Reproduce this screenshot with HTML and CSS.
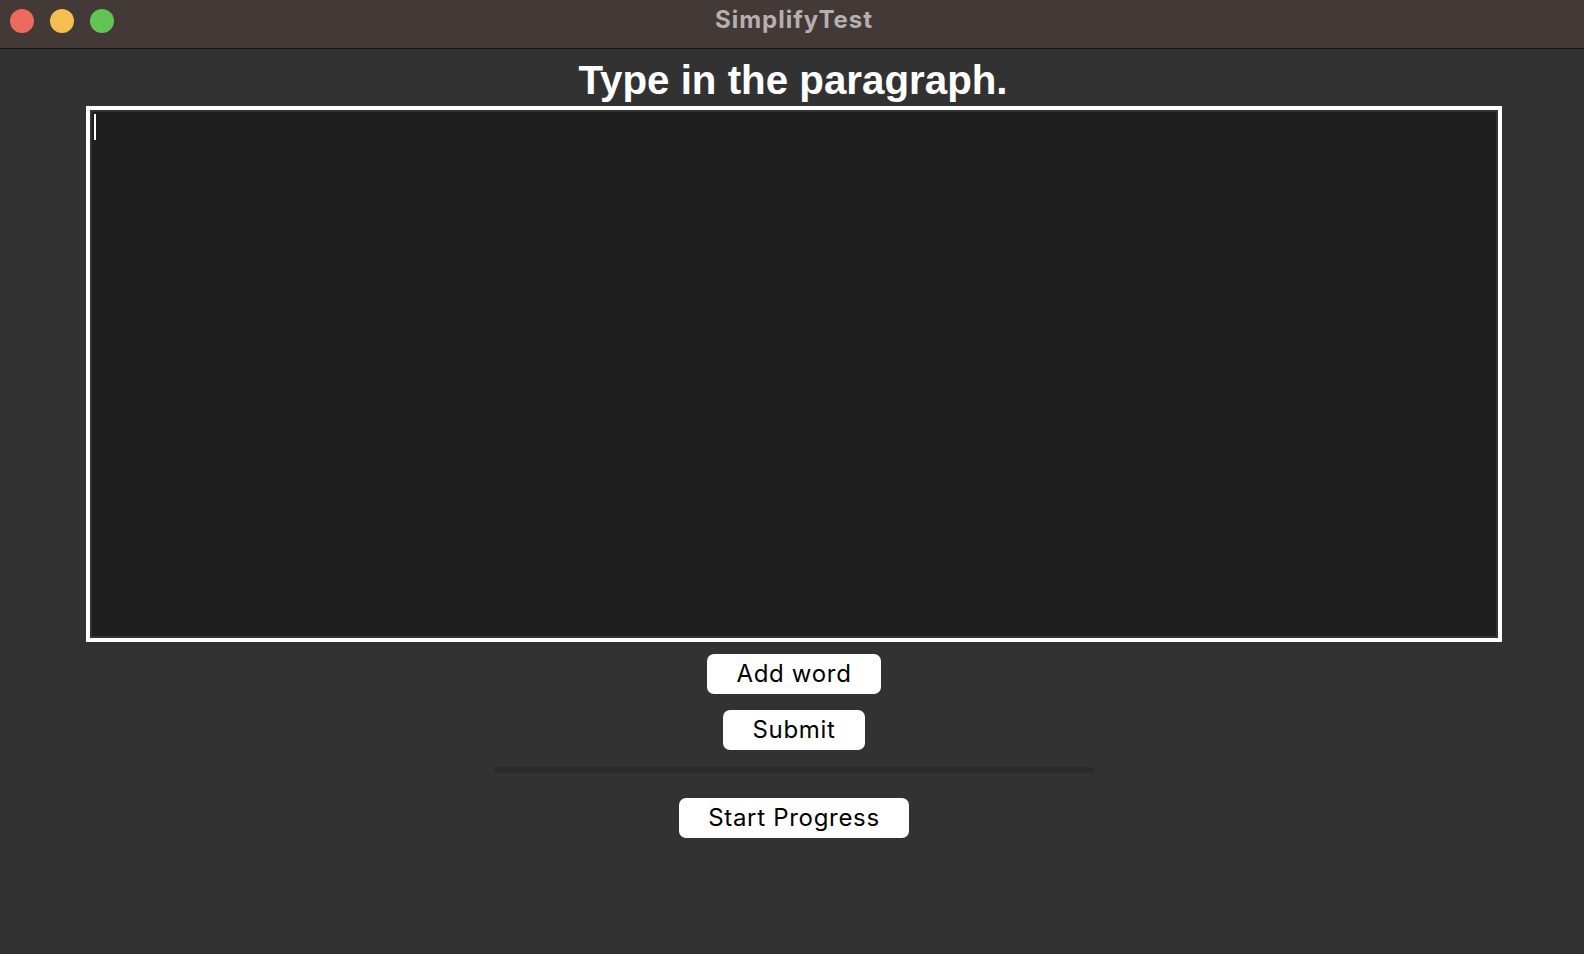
FILE: index.html
```html
<!DOCTYPE html>
<html lang="en">
<head>
<meta charset="utf-8">
<title>SimplifyTest</title>
<link rel="stylesheet" href="styles.css">
</head>
<body>
<div class="window">
  <header class="titlebar">
    <div class="lights">
      <span class="light light-close"></span>
      <span class="light light-min"></span>
      <span class="light light-max"></span>
    </div>
    <div class="title">SimplifyTest</div>
    <div class="spacer"></div>
  </header>
  <main class="content">
    <h1 class="heading">Type in the paragraph.</h1>
    <div class="editor"><span class="caret"></span></div>
    <button class="btn btn-add">Add word</button>
    <button class="btn btn-submit">Submit</button>
    <div class="separator"></div>
    <button class="btn btn-start">Start Progress</button>
  </main>
</div>
</body>
</html>
```

FILE: styles.css
```css
html, body {
  margin: 0;
  padding: 0;
  background: #323232;
}

body {
  width: 1584px;
  height: 954px;
  overflow: hidden;
  font-family: "Liberation Sans", Arial, sans-serif;
}

.window {
  display: flex;
  flex-direction: column;
  height: 100%;
}

.titlebar {
  height: 48px;
  background: #433a38;
  border-bottom: 1px solid #161616;
  display: grid;
  grid-template-columns: 1fr auto 1fr;
  align-items: center;
}

.lights {
  display: flex;
  gap: 16px;
  padding-left: 10px;
  padding-bottom: 7px;
}

.light {
  width: 24px;
  height: 24px;
  border-radius: 50%;
  display: block;
}

.light-close { background: #ed6a5e; }
.light-min { background: #f5bf4f; }
.light-max { background: #61c554; }

.title {
  font-family: "Inter", "Liberation Sans", sans-serif;
  font-weight: 700;
  font-size: 24px;
  letter-spacing: 1px;
  color: #b7afad;
  padding-bottom: 10px;
  padding-left: 4px;
}

.content {
  display: flex;
  flex-direction: column;
  align-items: center;
  padding-top: 8px;
  padding-left: 4px;
}

.heading {
  margin: 0 0 1px -2px;
  font-family: "Liberation Sans", Arial, sans-serif;
  font-weight: 700;
  font-size: 40.3px;
  line-height: 48px;
  color: #ffffff;
}

.editor {
  box-sizing: border-box;
  width: 1416px;
  height: 536px;
  border: 4px solid #ffffff;
  background: #1f1f1f;
  box-shadow: inset 0 0 0 2px #333333;
  padding: 4px;
}

.caret {
  display: block;
  width: 2px;
  height: 26px;
  background: #ffffff;
}

.btn {
  box-sizing: border-box;
  height: 40px;
  padding: 0 29px;
  border: none;
  border-radius: 7px;
  background: #ffffff;
  color: #000000;
  font-family: "Inter", "Liberation Sans", sans-serif;
  font-size: 24px;
  letter-spacing: 0.7px;
  line-height: 40px;
}

.btn-add {
  margin-top: 12px;
}

.btn-submit {
  margin-top: 16px;
}

.separator {
  margin-top: 17px;
  width: 600px;
  height: 6px;
  border-radius: 3px;
  background: #2b2b2b;
}

.btn-start {
  margin-top: 25px;
}
```
